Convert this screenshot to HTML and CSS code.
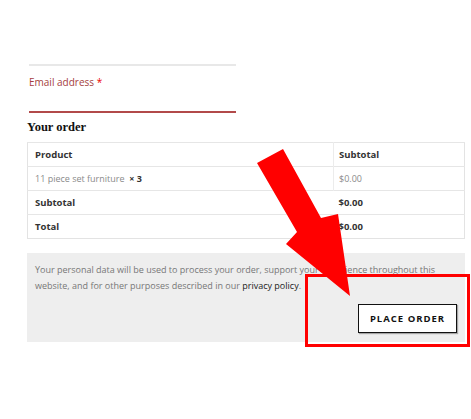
FILE: index.html
```html
<!DOCTYPE html>
<html>
<head>
<meta charset="utf-8">
<link rel="stylesheet" href="styles.css">
</head>
<body>
<div class="page">
  <div class="field">
    <div class="topline"></div>
    <label class="label">Email address <span class="req">*</span></label>
    <div class="input"></div>
  </div>
  <h3 class="heading">Your order</h3>
  <table class="order">
    <tr class="head"><th class="c1">Product</th><th class="c2">Subtotal</th></tr>
    <tr class="item"><td class="c1">11 piece set furniture&nbsp; <strong>× 3</strong></td><td class="c2">$0.00</td></tr>
    <tr class="sum"><th class="c1">Subtotal</th><th class="c2">$0.00</th></tr>
    <tr class="sum"><th class="c1">Total</th><th class="c2">$0.00</th></tr>
  </table>
  <div class="payment">
    <p class="privacy">Your personal data will be used to process your order, support your experience throughout this website, and for other purposes described in our <a class="link">privacy policy</a>.</p>
    <div class="actions"><button class="place">PLACE ORDER</button></div>
  </div>
</div>
<div class="highlight"></div>
<svg class="arrow" width="471" height="419" viewBox="0 0 471 419">
  <polygon points="257,163 283,149 321,218 338,214 350,296 286,244 297,232" fill="#ff0000"/>
</svg>
</body>
</html>
```
FILE: styles.css
```css
html, body { margin: 0; padding: 0; background: #fff; }
body { font-family: "Open Sans", "Noto Sans", sans-serif; color: #333; position: relative; width: 471px; height: 419px; overflow: hidden; }
.page { padding: 64px 6px 0 27px; }
.field { width: 207px; margin-left: 2px; }
.topline { border-top: 2px solid #e8e8e8; }
.label { display: block; margin-top: 9px; font-size: 10px; line-height: 14px; color: #a5403d; }
.req { color: #e00; }
.input { height: 22px; border-bottom: 2px solid #b24a4a; }
.heading { margin: 6px 0 0; font-family: "Liberation Serif", serif; font-weight: bold; font-size: 12.5px; line-height: 16px; color: #111; }
.order { margin-top: 7px; width: 438px; border-collapse: collapse; border: 1px solid #e3e3e3; font-size: 9px; }
.order th, .order td { text-align: left; height: 23px; padding: 0 0 0 7px; border-top: 1px solid #e6e6e6; }
.order th { font-weight: bold; color: #333; font-size: 9.5px; }
.order td { color: #8a8a8a; }
.order td strong { color: #333; }
.order .c1 { width: 298px; }
.order .c2 { padding-left: 5px; }
.order .head .c1, .order .item .c1 { border-right: 1px solid #ececec; }
.payment { margin-top: 14px; width: 438px; height: 89px; background: #eeeeee; box-sizing: border-box; padding: 9px 8px 9px 8px; display: flex; flex-direction: column; }
.privacy { margin: 0; font-size: 9px; line-height: 16px; color: #777; }
.link { color: #222; }
.actions { margin-top: auto; display: flex; justify-content: flex-end; }
.place { width: 99px; height: 29px; background: #fff; border: 1px solid #111; box-shadow: 1px 1px 1px rgba(0,0,0,0.3); font-family: "Open Sans", sans-serif; font-weight: bold; font-size: 9.5px; letter-spacing: 1px; color: #111; padding: 0; }
.highlight { position: absolute; left: 305px; top: 274px; width: 165px; height: 73px; box-sizing: border-box; border: 3px solid #ff0000; }
.arrow { position: absolute; left: 0; top: 0; }
```
